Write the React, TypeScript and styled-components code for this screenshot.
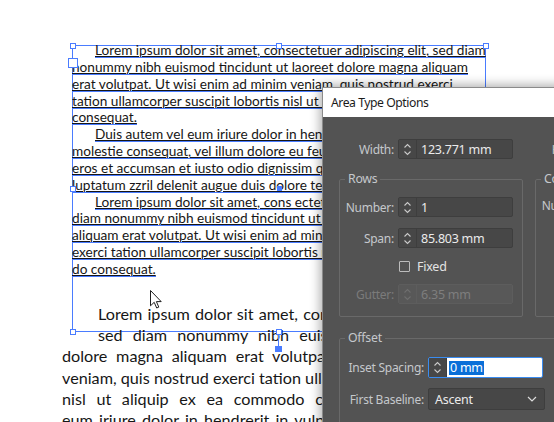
import styled, { createGlobalStyle } from "styled-components";

const GlobalStyle = createGlobalStyle`
  *, *::before, *::after { box-sizing: border-box; }
  html, body { margin: 0; padding: 0; background: #ffffff; }
  body { overflow: hidden; }
`;

const SEL = "#4a7cff";

// lines run on under the dialog; only the part that shows is kept
const upperLines: { text: string; indent?: boolean }[] = [
  { text: "Lorem ipsum dolor sit amet, consectetuer adipiscing elit, sed diam", indent: true },
  { text: "nonummy nibh euismod tincidunt ut laoreet dolore magna aliquam" },
  { text: "erat volutpat. Ut wisi enim ad minim veniam, quis nostrud exerci" },
  { text: "tation ullamcorper suscipit lobortis nisl ut aliquip" },
  { text: "consequat." },
  { text: "Duis autem vel eum iriure dolor in hendrerit", indent: true },
  { text: "molestie consequat, vel illum dolore eu feugiat" },
  { text: "eros et accumsan et iusto odio dignissim qui" },
  { text: "luptatum zzril delenit augue duis dolore te feugait" },
  { text: "Lorem ipsum dolor sit amet, cons ectetuer", indent: true },
  { text: "diam nonummy nibh euismod tincidunt ut laoreet" },
  { text: "aliquam erat volutpat. Ut wisi enim ad minim" },
  { text: "exerci tation ullamcorper suscipit lobortis nisl" },
  { text: "do consequat." },
];

const lowerLines: { text: string; indent?: boolean; spacing: number }[] = [
  { text: "Lorem ipsum dolor sit amet, consectetuer", indent: true, spacing: 1 },
  { text: "sed diam nonummy nibh euismod", indent: true, spacing: 6 },
  { text: "dolore magna aliquam erat volutpat.", spacing: 4.6 },
  { text: "veniam, quis nostrud exerci tation ullamcorper", spacing: 0 },
  { text: "nisl ut aliquip ex ea commodo consequat.", spacing: 6.5 },
  { text: "eum iriure dolor in hendrerit in vulputate", spacing: 2 },
];

const Artboard = styled.main`
  position: relative;
  width: 554px;
  height: 422px;
  overflow: hidden;
  background: #ffffff;
  color: #161616;
  font-family: Lato, "Open Sans", sans-serif;
`;

/* ---------- selected text frame ---------- */

const Frame = styled.div`
  position: absolute;
  left: 72px;
  top: 45px;
  width: 414px;
  height: 287px;
  border: 1px solid ${SEL};
`;

const FrameText = styled.div`
  display: flex;
  flex-direction: column;
  margin: -4px 0 0 -1px;
  font-size: 13.65px;
`;

const TextLine = styled.div<{ $indent?: boolean }>`
  height: 16.85px;
  line-height: 16.85px;
  white-space: nowrap;
  padding-left: ${(p) => (p.$indent ? "23px" : "0")};
`;

const Underlined = styled.span`
  position: relative;
  text-decoration: underline;
  text-decoration-thickness: 1px;
  text-underline-offset: 1px;
  &::after {
    content: "";
    position: absolute;
    left: 0;
    right: 0;
    bottom: 0;
    height: 1px;
    background: ${SEL};
  }
`;

const Handle = styled.span<{ $x: number; $y: number }>`
  position: absolute;
  left: ${(p) => p.$x - 3}px;
  top: ${(p) => p.$y - 3}px;
  width: 6px;
  height: 6px;
  background: #fff;
  border: 1px solid ${SEL};
`;

const InPort = styled.span`
  position: absolute;
  left: 68px;
  top: 58px;
  width: 10px;
  height: 10px;
  background: #fff;
  border: 1px solid ${SEL};
`;

const CenterDot = styled.span`
  position: absolute;
  left: 277px;
  top: 186px;
  width: 5px;
  height: 5px;
  background: ${SEL};
`;

const Stem = styled.span`
  position: absolute;
  left: 278px;
  top: 334px;
  width: 1px;
  height: 12px;
  background: ${SEL};
`;

const Grip = styled.span`
  position: absolute;
  left: 275px;
  top: 346px;
  width: 7px;
  height: 6px;
  background: ${SEL};
`;

/* ---------- unselected text frame ---------- */

const Story = styled.div`
  position: absolute;
  left: 62px;
  top: 303px;
  width: 420px;
  font-size: 16.2px;
`;

const JustLine = styled.div<{ $indent?: boolean; $spacing: number }>`
  height: 21.2px;
  line-height: 21.2px;
  white-space: nowrap;
  padding-left: ${(p) => (p.$indent ? "36px" : "0")};
  word-spacing: ${(p) => p.$spacing}px;
`;

const Cursor = styled.svg`
  position: absolute;
  left: 150px;
  top: 290px;
`;

/* ---------- dialog ---------- */

const Dialog = styled.section`
  position: absolute;
  left: 322px;
  top: 87px;
  width: 290px;
  height: 360px;
  border: 1px solid #8b8b8b;
  box-shadow: 0 0 10px 2px rgba(0, 0, 0, 0.32);
  display: flex;
  flex-direction: column;
  font-family: "Noto Sans", "Open Sans", sans-serif;
  font-size: 12px;
  letter-spacing: -0.25px;
`;

const TitleBar = styled.header`
  height: 29px;
  flex: none;
  display: flex;
  align-items: center;
  padding-left: 8px;
  background: #ffffff;
  color: #1b1b1b;
  font-size: 12.2px;
  letter-spacing: -0.45px;
`;

const Body = styled.div`
  flex: 1;
  display: flex;
  flex-direction: column;
  padding: 22px 0 0 16px;
  background: #535353;
  color: #c5c8cc;
`;

const Columns = styled.div<{ $top?: number }>`
  display: grid;
  grid-template-columns: 184px 1fr;
  column-gap: 12px;
  margin-top: ${(p) => p.$top ?? 0}px;
`;

const Group = styled.fieldset<{ $pad?: string; $top?: number; $gap?: number }>`
  margin: ${(p) => p.$top ?? 0}px 0 0 0;
  min-width: 0;
  padding: ${(p) => p.$pad ?? "10px 0 12px 0"};
  border: 1px solid #696969;
  border-radius: 2px;
  display: flex;
  flex-direction: column;
  gap: ${(p) => p.$gap ?? 11}px;
`;

const Legend = styled.legend`
  margin-left: 5px;
  padding: 0 3px;
  line-height: 16px;
  font-size: 12.3px;
  color: #c5c8cc;
`;

const Field = styled.div<{ $label: number; $pad?: number }>`
  display: grid;
  grid-template-columns: ${(p) => p.$label}px 115px;
  column-gap: 4px;
  align-items: center;
  padding-left: ${(p) => p.$pad ?? 0}px;
`;

const Label = styled.span<{ $disabled?: boolean }>`
  text-align: right;
  white-space: nowrap;
  color: ${(p) => (p.$disabled ? "#7b7b7b" : "#c5c8cc")};
`;

const Box = styled.div<{ $disabled?: boolean; $focus?: boolean; $h?: number }>`
  height: ${(p) => p.$h ?? 20}px;
  display: flex;
  align-items: stretch;
  background: ${(p) => (p.$disabled ? "#585858" : "#474747")};
  border: 1px solid ${(p) => (p.$focus ? "#3a8cf0" : p.$disabled ? "#5d5d5d" : "#3e3e3e")};
  border-radius: 2px;
  overflow: hidden;
`;

const Spinner = styled.span<{ $disabled?: boolean }>`
  width: 18px;
  flex: none;
  display: flex;
  align-items: center;
  justify-content: center;
  background: ${(p) => (p.$disabled ? "#585858" : "#474747")};
  border-right: 1px solid ${(p) => (p.$disabled ? "#5d5d5d" : "#3e3e3e")};
  color: ${(p) => (p.$disabled ? "#6e6e6e" : "#c9c9c9")};
`;

const Value = styled.span<{ $disabled?: boolean; $focus?: boolean }>`
  flex: 1;
  display: flex;
  align-items: center;
  padding-left: ${(p) => (p.$focus ? 2 : 4)}px;
  background: ${(p) => (p.$focus ? "#ffffff" : "transparent")};
  color: ${(p) => (p.$disabled ? "#7e7e7e" : "#ebebeb")};
  font-size: 12.5px;
`;

const Selected = styled.span`
  background: #0a6fd8;
  color: #ffffff;
  padding: 0 1px;
  line-height: 14px;
`;

const CheckRow = styled.label`
  display: flex;
  align-items: center;
  gap: 7px;
  height: 14px;
  padding-left: 59px;
  color: #e3e3e3;
  font-size: 12.5px;
`;

const CheckBox = styled.span`
  width: 11px;
  height: 11px;
  border: 1px solid #bcbcbc;
  border-radius: 1px;
`;

const Select = styled.div`
  height: 22px;
  width: 117px;
  display: flex;
  align-items: center;
  justify-content: space-between;
  padding: 0 7px 0 6px;
  background: #474747;
  border: 1px solid #3e3e3e;
  border-radius: 2px;
  color: #ebebeb;
  font-size: 12.5px;
`;

const Arrows = () => (
  <svg width="9" height="15" viewBox="0 0 9 15" fill="none" stroke="currentColor" strokeWidth="1.1">
    <path d="M1.5 5.5 L4.5 2.5 L7.5 5.5" />
    <path d="M1.5 9.5 L4.5 12.5 L7.5 9.5" />
  </svg>
);

const Chevron = () => (
  <svg width="10" height="6" viewBox="0 0 10 6" fill="none" stroke="#dcdcdc" strokeWidth="1.2">
    <path d="M1 1 L5 5 L9 1" />
  </svg>
);

type SpinProps = { value: string; disabled?: boolean };

const SpinField = ({ value, disabled }: SpinProps) => (
  <Box $disabled={disabled}>
    <Spinner $disabled={disabled}>
      <Arrows />
    </Spinner>
    <Value $disabled={disabled}>{value}</Value>
  </Box>
);

export default function App() {
  return (
    <>
      <GlobalStyle />
      <Artboard>
        <Frame>
          <FrameText>
            {upperLines.map((l, i) => (
              <TextLine key={i} $indent={l.indent}>
                <Underlined>{l.text}</Underlined>
              </TextLine>
            ))}
          </FrameText>
        </Frame>

        <Story>
          {lowerLines.map((l, i) => (
            <JustLine key={i} $indent={l.indent} $spacing={l.spacing}>
              {l.text}
            </JustLine>
          ))}
        </Story>

        <Handle $x={72.5} $y={45.5} />
        <Handle $x={279} $y={45.5} />
        <Handle $x={486} $y={45.5} />
        <Handle $x={72.5} $y={188.5} />
        <Handle $x={72.5} $y={331.5} />
        <Handle $x={279} $y={331.5} />
        <InPort />
        <CenterDot />
        <Stem />
        <Grip />

        <Cursor width="12" height="19" viewBox="0 0 12 19">
          <path
            d="M0.5 0.5 V15.8 L4.2 12.3 L6.7 18 L8.8 17.1 L6.4 11.6 H11.2 Z"
            fill="#ffffff"
            stroke="#1e1e1e"
            strokeWidth="1"
            strokeLinejoin="round"
          />
        </Cursor>

        <Dialog>
          <TitleBar>Area Type Options</TitleBar>
          <Body>
            <Columns>
              <Field $label={55}>
                <Label>Width:</Label>
                <SpinField value="123.771 mm" />
              </Field>
              <Field $label={55} $pad={1}>
                <Label>Height:</Label>
              </Field>
            </Columns>

            <Columns $top={12}>
              <Group>
                <Legend>Rows</Legend>
                <Field $label={54}>
                  <Label>Number:</Label>
                  <SpinField value="1" />
                </Field>
                <Field $label={54}>
                  <Label>Span:</Label>
                  <SpinField value="85.803 mm" />
                </Field>
                <CheckRow>
                  <CheckBox />
                  Fixed
                </CheckRow>
                <Field $label={54}>
                  <Label $disabled>Gutter:</Label>
                  <SpinField value="6.35 mm" disabled />
                </Field>
              </Group>
              <Group>
                <Legend>Columns</Legend>
                <Field $label={54}>
                  <Label>Number:</Label>
                </Field>
              </Group>
            </Columns>

            <Group $pad="11px 0 20px 0" $top={13} $gap={10}>
              <Legend>Offset</Legend>
              <Field $label={84}>
                <Label>Inset Spacing:</Label>
                <Box $focus $h={21}>
                  <Spinner>
                    <Arrows />
                  </Spinner>
                  <Value $focus>
                    <Selected>0 mm</Selected>
                  </Value>
                </Box>
              </Field>
              <Field $label={84}>
                <Label>First Baseline:</Label>
                <Select>
                  Ascent
                  <Chevron />
                </Select>
              </Field>
            </Group>
          </Body>
        </Dialog>
      </Artboard>
    </>
  );
}
